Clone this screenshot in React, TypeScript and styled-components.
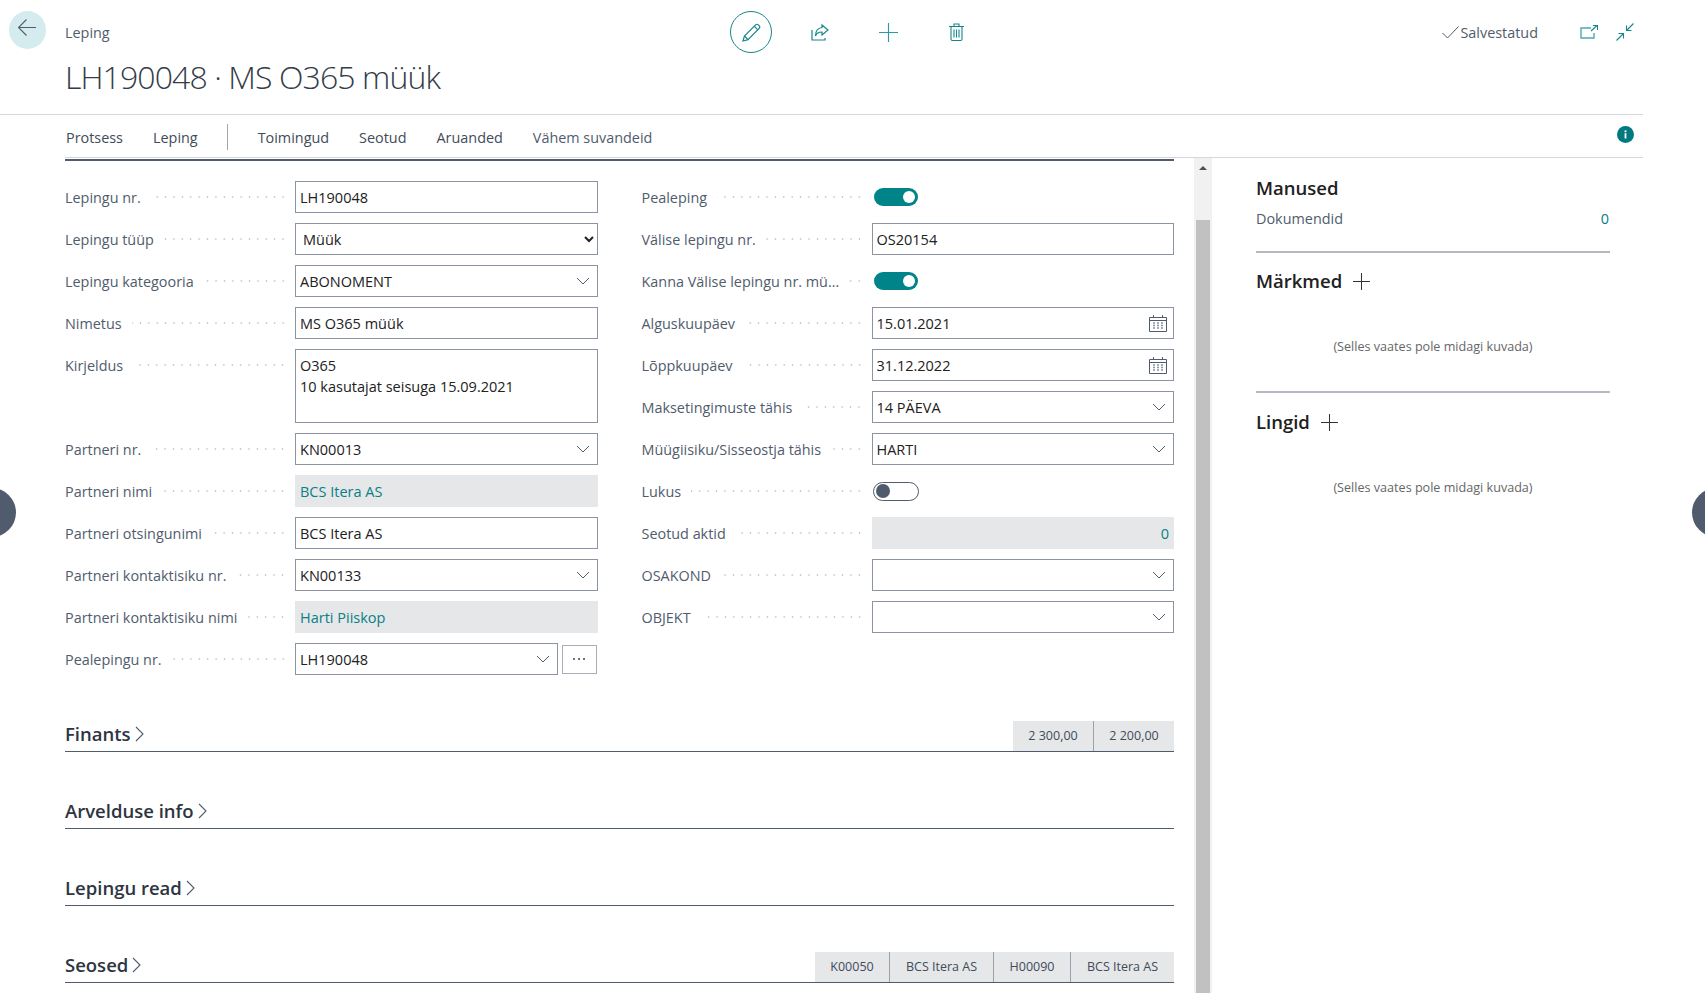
import React from "react";
import styled, { createGlobalStyle } from "styled-components";

const GlobalStyle = createGlobalStyle`
  html, body {
    margin: 0;
    padding: 0;
    background: #fff;
  }
  body {
    font-family: "Open Sans", "Noto Sans", "Liberation Sans", sans-serif;
    font-size: 14.4px;
    color: #212121;
  }
  * {
    box-sizing: border-box;
  }
`;

type Field =
  | { kind: "text"; label: string; value: string }
  | { kind: "select"; label: string; value: string }
  | { kind: "combo"; label: string; value: string }
  | { kind: "date"; label: string; value: string }
  | { kind: "link"; label: string; value: string; right?: boolean }
  | { kind: "note"; label: string; lines: string }
  | { kind: "lookup"; label: string; value: string }
  | { kind: "toggle"; label: string; on: boolean };

const leftFields: Field[] = [
  { kind: "text", label: "Lepingu nr.", value: "LH190048" },
  { kind: "select", label: "Lepingu tüüp", value: "Müük" },
  { kind: "combo", label: "Lepingu kategooria", value: "ABONOMENT" },
  { kind: "text", label: "Nimetus", value: "MS O365 müük" },
  { kind: "note", label: "Kirjeldus", lines: "O365\n10 kasutajat seisuga 15.09.2021" },
  { kind: "combo", label: "Partneri nr.", value: "KN00013" },
  { kind: "link", label: "Partneri nimi", value: "BCS Itera AS" },
  { kind: "text", label: "Partneri otsingunimi", value: "BCS Itera AS" },
  { kind: "combo", label: "Partneri kontaktisiku nr.", value: "KN00133" },
  { kind: "link", label: "Partneri kontaktisiku nimi", value: "Harti Piiskop" },
  { kind: "lookup", label: "Pealepingu nr.", value: "LH190048" },
];

const rightFields: Field[] = [
  { kind: "toggle", label: "Pealeping", on: true },
  { kind: "text", label: "Välise lepingu nr.", value: "OS20154" },
  { kind: "toggle", label: "Kanna Välise lepingu nr. mü…", on: true },
  { kind: "date", label: "Alguskuupäev", value: "15.01.2021" },
  { kind: "date", label: "Lõppkuupäev", value: "31.12.2022" },
  { kind: "combo", label: "Maksetingimuste tähis", value: "14 PÄEVA" },
  { kind: "combo", label: "Müügiisiku/Sisseostja tähis", value: "HARTI" },
  { kind: "toggle", label: "Lukus", on: false },
  { kind: "link", label: "Seotud aktid", value: "0", right: true },
  { kind: "combo", label: "OSAKOND", value: "" },
  { kind: "combo", label: "OBJEKT", value: "" },
];

const sections = [
  { title: "Finants", chips: [{ text: "2 300,00", width: 80 }, { text: "2 200,00", width: 81 }] },
  { title: "Arvelduse info", chips: [] },
  { title: "Lepingu read", chips: [] },
  {
    title: "Seosed",
    chips: [
      { text: "K00050", width: 74 },
      { text: "BCS Itera AS", width: 104 },
      { text: "H00090", width: 77 },
      { text: "BCS Itera AS", width: 104 },
    ],
  },
];

const tabs = ["Protsess", "Leping", "|", "Toimingud", "Seotud", "Aruanded", "Vähem suvandeid"];

const ChevronDown = () => (
  <svg width="14" height="8" viewBox="0 0 14 8" fill="none">
    <path d="M1 1l6 6 6-6" stroke="#505c6d" strokeWidth="1" />
  </svg>
);

const ChevronRight = () => (
  <svg width="9" height="16" viewBox="0 0 9 16" fill="none">
    <path d="M1 1l7 7-7 7" stroke="#505c6d" strokeWidth="1.1" />
  </svg>
);

const CalendarIcon = () => (
  <svg width="18" height="17" viewBox="0 0 18 17" fill="none">
    <path d="M.5 2.500h17v14H.5z" stroke="#505c6d" />
    <path d="M1 5.500h16" stroke="#505c6d" />
    <path d="M4.500 0v3M13.500 0v3" stroke="#505c6d" />
    <path
      d="M4 8h2M8 8h2M12 8h2M4 10.500h2M8 10.500h2M12 10.500h2M4 13h2M8 13h2M12 13h2"
      stroke="#8b939e"
      strokeWidth="1.3"
    />
  </svg>
);

const PlusIcon = ({ size, color }: { size: number; color: string }) => (
  <svg width={size} height={size} viewBox="0 0 18 18" fill="none">
    <path d="M9 0v18M0 9h18" stroke={color} strokeWidth="1.1" />
  </svg>
);

const FieldControl = ({ field }: { field: Field }) => {
  switch (field.kind) {
    case "text":
      return <TextInput readOnly defaultValue={field.value} />;
    case "select":
      return (
        <NativeSelect defaultValue={field.value}>
          <option>{field.value}</option>
        </NativeSelect>
      );
    case "combo":
      return (
        <Combo>
          <BareInput readOnly defaultValue={field.value} />
          <ChevronDown />
        </Combo>
      );
    case "date":
      return (
        <Combo $date>
          <BareInput readOnly defaultValue={field.value} />
          <CalendarIcon />
        </Combo>
      );
    case "link":
      return <ReadOnlyValue $right={field.right}>{field.value}</ReadOnlyValue>;
    case "note":
      return <NoteArea readOnly defaultValue={field.lines} />;
    case "lookup":
      return (
        <LookupRow>
          <Combo>
            <BareInput readOnly defaultValue={field.value} />
            <ChevronDown />
          </Combo>
          <LookupButton>
            <svg width="14" height="4" viewBox="0 0 14 4">
              <circle cx="2" cy="2" r="1" fill="#3c4654" />
              <circle cx="7" cy="2" r="1" fill="#3c4654" />
              <circle cx="12" cy="2" r="1" fill="#3c4654" />
            </svg>
          </LookupButton>
        </LookupRow>
      );
    case "toggle":
      return (
        <Toggle $on={field.on}>
          <Knob $on={field.on} />
        </Toggle>
      );
  }
};

const FieldColumn = ({ fields }: { fields: Field[] }) => (
  <Column>
    {fields.map((field) => (
      <Row key={field.label} $tall={field.kind === "note"}>
        <Label>
          <LabelText>{field.label}</LabelText>
          <Leader />
        </Label>
        <FieldControl field={field} />
      </Row>
    ))}
  </Column>
);

const App = () => {
  return (
    <Page>
      <GlobalStyle />
      <SideHandle $side="left" />
      <SideHandle $side="right" />

      <TopRow>
        <BackSlot>
          <BackButton>
            <svg width="18" height="17" viewBox="0 0 18 17" fill="none">
              <path d="M8.500.5l-8 8 8 8M.5 8.500H18" stroke="#505c6d" strokeWidth="1.1" />
            </svg>
          </BackButton>
        </BackSlot>
        <Breadcrumb>Leping</Breadcrumb>
        <Actions>
          <EditButton>
            <svg width="19" height="19" viewBox="0 0 19 19" fill="none" stroke="#17868c" strokeWidth="1.2">
              <path d="M1 18l1.400-5L13.600 1.800a1.900 1.900 0 0 1 2.700 0l.9.9a1.900 1.900 0 0 1 0 2.700L6 16.600z" />
              <path d="M2.400 13L6 16.600M12.200 3.200l3.600 3.600" />
            </svg>
          </EditButton>
          <ActionSlot>
            <svg width="18" height="17" viewBox="0 0 18 17" fill="none" stroke="#17868c" strokeWidth="1.2">
              <path d="M1 6v10h13v-2" />
              <path d="M11 1l6 5-6 5V8C7.500 8 5.500 9 4.500 12c0-5 2.500-8 6.500-8.500z" />
            </svg>
          </ActionSlot>
          <ActionSlot>
            <PlusIcon size={19} color="#2a9ba1" />
          </ActionSlot>
          <ActionSlot>
            <svg width="15" height="18" viewBox="0 0 15 18" fill="none" stroke="#17868c" strokeWidth="1.1">
              <path d="M0 3.500h15M5 3.500V1h5v2.500M2 3.500V16a1.500 1.500 0 0 0 1.500 1.500h8A1.500 1.500 0 0 0 13 16V3.500" />
              <path d="M5 6.500v8M7.500 6.500v8M10 6.500v8" />
            </svg>
          </ActionSlot>
        </Actions>
        <Status>
          <svg width="17" height="13" viewBox="0 0 17 13" fill="none">
            <path d="M.5 7l5 5L16.500.5" stroke="#505c6d" strokeWidth="1" />
          </svg>
          <StatusText>Salvestatud</StatusText>
        </Status>
        <WindowIcons>
          <svg width="18" height="14" viewBox="0 0 18 14" fill="none">
            <path d="M11 3H1v10h13V8" stroke="#4da9ae" strokeWidth="1.4" />
            <path d="M11 6l6-5.500M13 .5h4.500V5" stroke="#17868c" strokeWidth="1.1" />
          </svg>
          <svg width="18" height="18" viewBox="0 0 18 18" fill="none" stroke="#17868c" strokeWidth="1.1">
            <path d="M17.500.5l-7 7M10.500 2.500v5h5" />
            <path d="M.500 17.500l7-7M2.500 10.500h5v5" />
          </svg>
        </WindowIcons>
      </TopRow>

      <Title>LH190048 · MS O365 müük</Title>

      <TabBar>
        <TabList>
          {tabs.map((tab) =>
            tab === "|" ? <TabDivider key={tab} /> : <Tab key={tab}>{tab}</Tab>
          )}
        </TabList>
        <InfoBadge>
          <svg width="17" height="17" viewBox="0 0 17 17">
            <circle cx="8.500" cy="8.500" r="8.500" fill="#007a80" />
            <rect x="7.600" y="7.200" width="1.800" height="5.300" fill="#fff" />
            <rect x="7.600" y="4.400" width="1.800" height="1.800" fill="#fff" />
          </svg>
        </InfoBadge>
      </TabBar>

      <Body>
        <Main>
          <FormGrid>
            <FieldColumn fields={leftFields} />
            <FieldColumn fields={rightFields} />
          </FormGrid>
          {sections.map((section) => (
            <Section key={section.title}>
              <SectionTitle>
                {section.title}
                <ChevronRight />
              </SectionTitle>
              {section.chips.length > 0 && (
                <ChipRow>
                  {section.chips.map((chip, i) => (
                    <Chip key={i} $width={chip.width}>
                      {chip.text}
                    </Chip>
                  ))}
                </ChipRow>
              )}
            </Section>
          ))}
        </Main>

        <ScrollTrack>
          <ScrollArrow />
          <ScrollThumb />
        </ScrollTrack>

        <FactBox>
          <FactPart $top={16} $bottom={22}>
            <FactTitle>Manused</FactTitle>
            <FactRow>
              <span>Dokumendid</span>
              <FactCount>0</FactCount>
            </FactRow>
          </FactPart>
          <FactPart $top={14} $bottom={34}>
            <FactTitle>
              Märkmed
              <PlusIcon size={17} color="#333" />
            </FactTitle>
            <EmptyNote>(Selles vaates pole midagi kuvada)</EmptyNote>
          </FactPart>
          <FactPart $top={15} $bottom={0} $plain>
            <FactTitle>
              Lingid
              <PlusIcon size={17} color="#333" />
            </FactTitle>
            <EmptyNote>(Selles vaates pole midagi kuvada)</EmptyNote>
          </FactPart>
        </FactBox>
      </Body>
    </Page>
  );
};

const Page = styled.div`
  position: relative;
  width: 1705px;
  height: 994px;
  overflow: hidden;
  background: #fff;
`;

const SideHandle = styled.div<{ $side: "left" | "right" }>`
  position: absolute;
  top: 488px;
  width: 49px;
  height: 49px;
  border-radius: 50%;
  background: #505c6d;
  ${(p) => (p.$side === "left" ? "left: -33px;" : "right: -36px;")}
`;

const TopRow = styled.div`
  display: flex;
  align-items: center;
  height: 42px;
  margin-top: 11px;
  padding-right: 71px;
`;

const BackSlot = styled.div`
  width: 65px;
  padding-left: 9px;
`;

const BackButton = styled.div`
  width: 37px;
  height: 38px;
  margin-top: -4px;
  border-radius: 50%;
  background: #d5ecef;
  display: flex;
  align-items: center;
  justify-content: center;
  padding: 0 1px 5px 0;
`;

const Breadcrumb = styled.div`
  width: 665px;
  color: #505c6d;
`;

const Actions = styled.div`
  display: flex;
  gap: 26.5px;
`;

const ActionSlot = styled.div`
  width: 42px;
  height: 42px;
  display: flex;
  align-items: center;
  justify-content: center;
`;

const EditButton = styled(ActionSlot)`
  border: 1px solid #17868c;
  border-radius: 50%;
`;

const Status = styled.div`
  margin-left: auto;
  display: flex;
  align-items: center;
  gap: 1px;
  color: #505c6d;
`;

const StatusText = styled.span``;

const WindowIcons = styled.div`
  display: flex;
  align-items: center;
  gap: 18px;
  margin-left: 42px;
`;

const Title = styled.h1`
  margin: 0;
  padding: 0 0 0 65px;
  height: 62px;
  width: 1643px;
  font-size: 32px;
  line-height: 48px;
  font-weight: 300;
  letter-spacing: -0.9px;
  color: #333c48;
  border-bottom: 1px solid #d6d6de;
`;

const TabBar = styled.div`
  display: flex;
  align-items: center;
  justify-content: space-between;
  height: 42px;
  margin-left: 65px;
  padding: 2px 9px 0 0;
  width: 1578px;
`;

const TabList = styled.div`
  display: flex;
  align-items: center;
  gap: 30px;
  padding-left: 1px;
`;

const Tab = styled.div`
  color: #414b59;
  &:last-child {
    color: #505c6d;
  }
`;

const TabDivider = styled.div`
  width: 1px;
  height: 26px;
  margin-left: -1px;
  background: #a0a7b1;
`;

const InfoBadge = styled.div`
  display: flex;
  margin-top: -5px;
`;

const Body = styled.div`
  display: flex;
  margin-left: 65px;
  width: 1578px;
  height: 836px;
  border-top: 1px solid #d6d6de;
`;

const Main = styled.main`
  width: 1109px;
  flex: none;
  margin-top: 1px;
  border-top: 2px solid #505c6d;
  padding-top: 20px;
`;

const FormGrid = styled.div`
  display: grid;
  grid-template-columns: 1fr 1fr;
  column-gap: 44px;
`;

const Column = styled.div`
  display: flex;
  flex-direction: column;
  gap: 10px;
`;

const Row = styled.div<{ $tall?: boolean }>`
  display: grid;
  grid-template-columns: 230px 1fr;
  align-items: ${(p) => (p.$tall ? "start" : "center")};
  height: ${(p) => (p.$tall ? "74px" : "32px")};
`;

const Label = styled.div`
  display: flex;
  align-items: center;
  height: 32px;
  padding-right: 8px;
  color: #505c6d;
`;

const LabelText = styled.span`
  white-space: nowrap;
`;

const Leader = styled.span`
  flex: 1;
  height: 4px;
  margin-left: 10px;
  background: radial-gradient(circle, #c3c8ce 0.8px, transparent 1.1px) right center / 8.4px 4px repeat-x;
`;

const controlBox = `
  width: 100%;
  height: 32px;
  border: 1px solid #8a94a3;
  background: #fff;
  color: #212121;
  font: inherit;
  font-size: 14.5px;
  outline: none;
`;

const TextInput = styled.input`
  ${controlBox}
  padding: 0 4px;
`;

const NativeSelect = styled.select`
  ${controlBox}
  padding: 0 0 0 3px;
  border-radius: 0;
`;

const NoteArea = styled.textarea`
  ${controlBox}
  height: 74px;
  padding: 5px 4px 0;
  line-height: 21px;
  resize: none;
  overflow: hidden;
`;

const Combo = styled.div<{ $date?: boolean }>`
  ${controlBox}
  flex: 1;
  min-width: 0;
  display: flex;
  align-items: center;
  padding-right: ${(p) => (p.$date ? "6px" : "7px")};
`;

const BareInput = styled.input`
  flex: 1;
  min-width: 0;
  border: 0;
  outline: none;
  padding: 0 4px;
  background: transparent;
  color: #212121;
  font: inherit;
`;

const ReadOnlyValue = styled.div<{ $right?: boolean }>`
  height: 32px;
  line-height: 33px;
  padding: 0 5px;
  background: #e5e7e9;
  color: #0a7f85;
  font-size: 14.5px;
  text-align: ${(p) => (p.$right ? "right" : "left")};
`;

const LookupRow = styled.div`
  display: flex;
  align-items: center;
  gap: 4px;
`;

const LookupButton = styled.div`
  flex: none;
  width: 35px;
  height: 29px;
  margin-right: 1px;
  border: 1px solid #a7aeb8;
  display: flex;
  align-items: center;
  justify-content: center;
`;

const Toggle = styled.div<{ $on: boolean }>`
  display: flex;
  align-items: center;
  justify-content: ${(p) => (p.$on ? "flex-end" : "flex-start")};
  width: ${(p) => (p.$on ? "44px" : "46px")};
  height: ${(p) => (p.$on ? "18px" : "19px")};
  margin-left: ${(p) => (p.$on ? "2px" : "1px")};
  padding: ${(p) => (p.$on ? "0 3px" : "0 2px")};
  border-radius: 10px;
  background: ${(p) => (p.$on ? "#008489" : "#fff")};
  border: ${(p) => (p.$on ? "0" : "1px solid #505c6d")};
`;

const Knob = styled.div<{ $on: boolean }>`
  width: ${(p) => (p.$on ? "12px" : "14px")};
  height: ${(p) => (p.$on ? "12px" : "14px")};
  border-radius: 50%;
  background: ${(p) => (p.$on ? "#fff" : "#505c6d")};
`;

const Section = styled.section`
  display: flex;
  align-items: flex-end;
  justify-content: space-between;
  height: 77.1px;
  border-bottom: 1px solid #505c6d;
`;

const SectionTitle = styled.h2`
  display: flex;
  align-items: center;
  gap: 4px;
  margin: 0 0 3px;
  font-size: 18.5px;
  line-height: 28px;
  font-weight: 600;
  color: #2d3540;
`;

const ChipRow = styled.div`
  display: flex;
`;

const Chip = styled.div<{ $width: number }>`
  width: ${(p) => p.$width}px;
  height: 30px;
  line-height: 30px;
  text-align: center;
  font-size: 12.5px;
  color: #414b59;
  background: #e5e7e9;
  & + & {
    border-left: 1px solid #9aa1aa;
  }
`;

const ScrollTrack = styled.div`
  position: relative;
  flex: none;
  width: 18px;
  margin-left: 20px;
  padding: 62px 2px 0;
  background: #f1f1f1;
`;

const ScrollArrow = styled.div`
  position: absolute;
  top: 8px;
  left: 5px;
  width: 0;
  height: 0;
  border-left: 4px solid transparent;
  border-right: 4px solid transparent;
  border-bottom: 4px solid #505050;
`;

const ScrollThumb = styled.div`
  height: 100%;
  background: #c1c1c1;
`;

const FactBox = styled.aside`
  width: 354px;
  margin-left: 44px;
`;

const FactPart = styled.div<{ $top: number; $bottom: number; $plain?: boolean }>`
  padding: ${(p) => p.$top}px 0 ${(p) => p.$bottom}px;
  border-bottom: ${(p) => (p.$plain ? "0" : "2px solid #b5bac1")};
`;

const FactTitle = styled.h3`
  display: flex;
  align-items: center;
  gap: 11px;
  margin: 0;
  font-size: 18.5px;
  line-height: 28px;
  font-weight: 600;
  color: #212121;
`;

const FactRow = styled.div`
  display: flex;
  justify-content: space-between;
  margin-top: 7px;
  line-height: 20px;
  color: #505c6d;
`;

const FactCount = styled.span`
  color: #0a7f85;
  padding-right: 1px;
`;

const EmptyNote = styled.div`
  margin-top: 42px;
  line-height: 20px;
  text-align: center;
  font-size: 12.6px;
  color: #666;
`;

export default App;
